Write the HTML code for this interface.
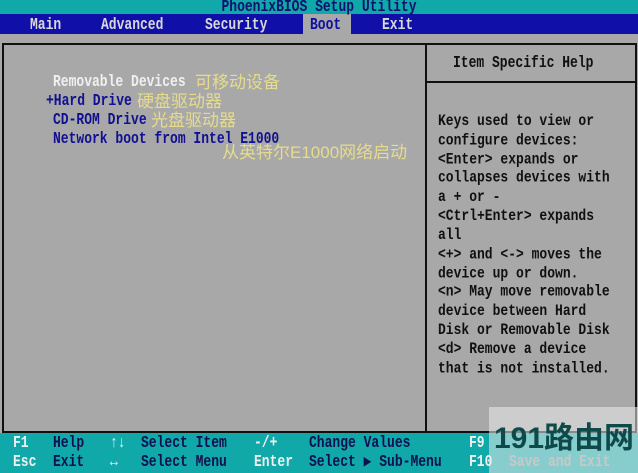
<!DOCTYPE html>
<html><head><meta charset="utf-8"><style>
body{margin:0;width:638px;height:473px;overflow:hidden;background:#a8a8a8;position:relative;font-family:"Liberation Mono",monospace;font-size:13px;font-weight:bold}
div{position:absolute;white-space:pre;line-height:16px}
.m{transform:scaleY(1.25);transform-origin:0 50%}
.cn{font-family:"Liberation Sans","Noto Sans CJK SC",sans-serif;font-weight:normal;color:#e6dc8c;font-size:17px;line-height:18px}
</style></head><body>
<div style="left:0;top:0;width:638px;height:14px;background:#10a8a8"></div>
<div style="left:0;top:14px;width:638px;height:20px;background:#1010a8"></div>
<div style="left:303px;top:14px;width:48px;height:20px;background:#a8a8a8"></div>
<div class="m" style="left:0;top:-1px;width:638px;text-align:center;color:#101070">PhoenixBIOS Setup Utility</div>
<div class="m" style="left:30px;top:17px;color:#d8d8d8">Main</div>
<div class="m" style="left:101px;top:17px;color:#d8d8d8">Advanced</div>
<div class="m" style="left:205px;top:17px;color:#d8d8d8">Security</div>
<div class="m" style="left:310px;top:17px;color:#1010a0">Boot</div>
<div class="m" style="left:382px;top:17px;color:#d8d8d8">Exit</div>
<div style="left:2px;top:43px;box-sizing:border-box;width:635px;height:390px;border:2px solid #101010"></div>
<div style="left:425px;top:43px;width:2px;height:390px;background:#101010"></div>
<div style="left:427px;top:81px;width:208px;height:2px;background:#101010"></div>
<div class="m" style="left:453px;top:55px;color:#101010">Item Specific Help</div>
<div style="left:438px;top:111.5px;color:#101010;line-height:15.83px;transform:scaleY(1.2);transform-origin:0 0">Keys used to view or
configure devices:
&lt;Enter&gt; expands or
collapses devices with
a + or -
&lt;Ctrl+Enter&gt; expands
all
&lt;+&gt; and &lt;-&gt; moves the
device up or down.
&lt;n&gt; May move removable
device between Hard
Disk or Removable Disk
&lt;d&gt; Remove a device
that is not installed.</div>
<div class="m" style="left:53px;top:74px;color:#f0f0f0">Removable Devices</div>
<div class="cn" style="left:195px;top:74px">可移动设备</div>
<div class="m" style="left:46px;top:93px;color:#101090">+Hard Drive</div>
<div class="cn" style="left:137px;top:93px">硬盘驱动器</div>
<div class="m" style="left:53px;top:112px;color:#101090">CD-ROM Drive</div>
<div class="cn" style="left:151px;top:112px">光盘驱动器</div>
<div class="m" style="left:53px;top:131px;color:#101090">Network boot from Intel E1000</div>
<div class="cn" style="left:222px;top:144px">从英特尔E1000网络启动</div>
<div style="left:0;top:433px;width:638px;height:40px;background:#10a8a8"></div>
<div class="m" style="left:13px;top:435px;color:#f0f0f0">F1</div>
<div class="m" style="left:53px;top:435px;color:#101050">Help</div>
<div class="m" style="left:110px;top:435px;color:#f0f0f0">↑↓</div>
<div class="m" style="left:141px;top:435px;color:#101050">Select Item</div>
<div class="m" style="left:254px;top:435px;color:#f0f0f0">-/+</div>
<div class="m" style="left:309px;top:435px;color:#101050">Change Values</div>
<div class="m" style="left:469px;top:435px;color:#f0f0f0">F9</div>
<div class="m" style="left:13px;top:454px;color:#f0f0f0">Esc</div>
<div class="m" style="left:53px;top:454px;color:#101050">Exit</div>
<div class="m" style="left:110px;top:454px;color:#f0f0f0">↔</div>
<div class="m" style="left:141px;top:454px;color:#101050">Select Menu</div>
<div class="m" style="left:254px;top:454px;color:#f0f0f0">Enter</div>
<div class="m" style="left:309px;top:454px;color:#101050">Select ▶ Sub-Menu</div>
<div class="m" style="left:469px;top:454px;color:#f0f0f0">F10</div>
<div style="left:489px;top:407px;width:149px;height:66px;background:rgba(235,235,235,0.55)"></div>
<div class="m" style="left:509px;top:454px;color:#c8c8c8">Save and Exit</div>
<div style="left:494px;top:424px;color:#0e4a4a;font-family:'Liberation Sans','Noto Sans CJK SC',sans-serif;font-size:30px;line-height:30px">191路由网</div>
</body></html>
